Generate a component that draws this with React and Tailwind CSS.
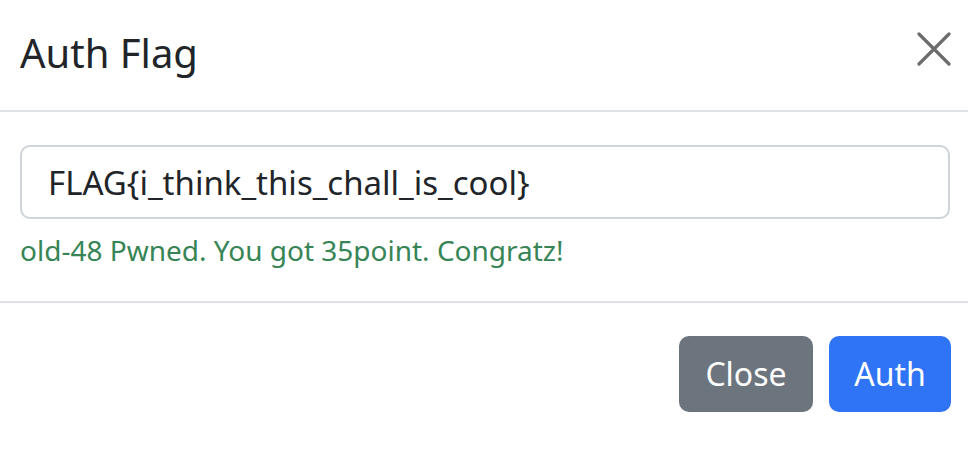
import React from 'react';

const App = () => {
  return (
    <div className="w-[968px] h-[462px] bg-white text-[#212529] font-['Noto_Sans',sans-serif] overflow-hidden">
      {/* Header */}
      <div className="h-[112px] flex items-center justify-between pl-[20px] pr-[17px] border-b-2 border-[#dee2e6]">
        <h5 className="text-[40px] leading-none pb-[4px]">Auth Flag</h5>
        <button className="self-start mt-[32px] w-[34px] h-[34px] flex items-center justify-center text-[#6c6c6c]">
          <svg viewBox="0 0 34 34" className="w-[34px] h-[34px]" fill="none" stroke="currentColor" strokeWidth="3.2" strokeLinecap="round">
            <path d="M2 2L32 32M32 2L2 32" />
          </svg>
        </button>
      </div>

      {/* Body */}
      <div className="pt-[33px] pb-[32px] pl-[20px] pr-[18px] border-b-2 border-[#dee2e6]">
        <input
          type="text"
          defaultValue="FLAG{i_think_this_chall_is_cool}"
          className="w-full h-[74px] px-[26px] text-[33px] text-[#212529] border-2 border-[#ced4da] rounded-[10px] outline-none"
        />
        <div className="mt-[12px] text-[28px] leading-[38px] text-[#378556]">
          old-48 Pwned. You got 35point. Congratz!
        </div>
      </div>

      {/* Footer */}
      <div className="flex justify-end gap-[16px] pt-[33px] pr-[17px]">
        <button className="w-[134px] h-[76px] rounded-[10px] bg-[#6c757d] text-white text-[32px]">Close</button>
        <button className="w-[122px] h-[76px] rounded-[10px] bg-[#2f74f5] text-white text-[32px]">Auth</button>
      </div>
    </div>
  );
};

export default App;
